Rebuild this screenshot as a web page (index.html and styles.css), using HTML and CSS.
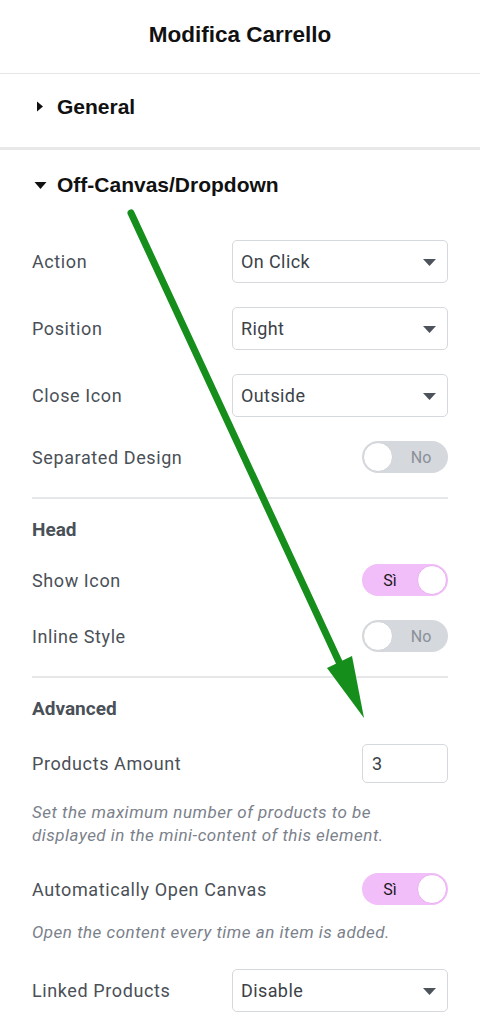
FILE: index.html
```html
<!DOCTYPE html>
<html lang="it">
<head>
<meta charset="utf-8">
<title>Modifica Carrello</title>
<link rel="stylesheet" href="styles.css">
</head>
<body>
<div class="page">
  <header class="header"><h1 class="title">Modifica Carrello</h1></header>

  <div class="section section-general">
    <svg class="caret-right" width="8" height="11" viewBox="0 0 8 11"><polygon points="1,0.5 7,5.5 1,10.5" fill="#111"/></svg>
    <span class="section-title">General</span>
  </div>

  <div class="section section-open">
    <svg class="caret-down" width="13" height="9" viewBox="0 0 13 9"><polygon points="0.5,1 12.5,1 6.5,8" fill="#111"/></svg>
    <span class="section-title">Off-Canvas/Dropdown</span>
  </div>

  <div class="fields">
    <div class="row row-select r-action">
      <span class="label">Action</span>
      <div class="select"><span>On Click</span><svg class="sel-caret" width="13" height="7" viewBox="0 0 13 7"><polygon points="0,0 13,0 6.5,7" fill="#4d535a"/></svg></div>
    </div>
    <div class="row row-select r-gap">
      <span class="label">Position</span>
      <div class="select"><span>Right</span><svg class="sel-caret" width="13" height="7" viewBox="0 0 13 7"><polygon points="0,0 13,0 6.5,7" fill="#4d535a"/></svg></div>
    </div>
    <div class="row row-select r-gap">
      <span class="label">Close Icon</span>
      <div class="select"><span>Outside</span><svg class="sel-caret" width="13" height="7" viewBox="0 0 13 7"><polygon points="0,0 13,0 6.5,7" fill="#4d535a"/></svg></div>
    </div>
    <div class="row row-toggle r-gap">
      <span class="label">Separated Design</span>
      <div class="toggle off"><span class="knob"></span><span class="ttext">No</span></div>
    </div>

    <div class="divider r-gap"></div>
    <div class="group-title g-gap">Head</div>

    <div class="row row-toggle r-show">
      <span class="label">Show Icon</span>
      <div class="toggle on"><span class="ttext">Sì</span><span class="knob"></span></div>
    </div>
    <div class="row row-toggle r-gap">
      <span class="label">Inline Style</span>
      <div class="toggle off"><span class="knob"></span><span class="ttext">No</span></div>
    </div>

    <div class="divider r-gap"></div>
    <div class="group-title g-gap">Advanced</div>

    <div class="row row-input r-gap">
      <span class="label">Products Amount</span>
      <div class="num-input">3</div>
    </div>
    <p class="desc d-1">Set the maximum number of products to be displayed in the mini-content of this element.</p>

    <div class="row row-toggle r-auto">
      <span class="label">Automatically Open Canvas</span>
      <div class="toggle on"><span class="ttext">Sì</span><span class="knob"></span></div>
    </div>
    <p class="desc d-2">Open the content every time an item is added.</p>

    <div class="row row-select r-linked">
      <span class="label">Linked Products</span>
      <div class="select"><span>Disable</span><svg class="sel-caret" width="13" height="7" viewBox="0 0 13 7"><polygon points="0,0 13,0 6.5,7" fill="#4d535a"/></svg></div>
    </div>
    <p class="desc d-3">Enable this option to show the linked products in the mini-cart.</p>
  </div>

  <svg class="arrow" width="480" height="1034" viewBox="0 0 480 1034">
    <line x1="131" y1="213" x2="340" y2="664" stroke="#168e1b" stroke-width="7" stroke-linecap="round"/>
    <polygon points="327,668 352,656 364,718" fill="#168e1b"/>
  </svg>
</div>
</body>
</html>
```

FILE: styles.css
```css
* { box-sizing: border-box; }
html, body { margin: 0; padding: 0; background: #fff; }
body { overflow: hidden; height: 1034px; }

.page {
  position: relative;
  width: 480px;
  font-family: Roboto, "Noto Sans", Arial, sans-serif;
}

.header {
  height: 74px;
  border-bottom: 1px solid #e6e6e6;
  display: flex;
  align-items: center;
  justify-content: center;
  padding-bottom: 3px;
}
.title {
  margin: 0;
  font-family: "Liberation Sans", Arial, sans-serif;
  font-weight: 700;
  font-size: 22.5px;
  color: #111;
}

.section {
  display: flex;
  align-items: center;
  padding-left: 34px;
}
.section-general {
  height: 76px;
  border-bottom: 3px solid #e8e8e8;
  padding-bottom: 8px;
}
.section-open {
  height: 70px;
}
.section-title {
  font-family: "Liberation Sans", Arial, sans-serif;
  font-weight: 700;
  font-size: 21px;
  color: #111;
}
.caret-right { margin-left: 2px; margin-right: 13px; }
.caret-down { margin-right: 10px; margin-top: 1px; }

.fields {
  display: flex;
  flex-direction: column;
  padding: 20px 32px 0 32px;
}

.row {
  display: flex;
  align-items: center;
  justify-content: space-between;
}
.row-select { height: 43px; }
.row-toggle { height: 32px; }
.row-input { height: 39px; }

.r-gap { margin-top: 24px; }
.r-show { margin-top: 23px; }
.r-auto { margin-top: 26px; }
.r-linked { margin-top: 25px; }
.g-gap { margin-top: 20px; }

.label {
  font-size: 18px;
  letter-spacing: 0.6px;
  color: #4a5057;
}

.select {
  width: 216px;
  height: 43px;
  border: 1px solid #d5d8dc;
  border-radius: 5px;
  display: flex;
  align-items: center;
  justify-content: space-between;
  padding: 0 11px 0 8px;
  font-size: 18px;
  letter-spacing: 0.4px;
  color: #3c4248;
}
.sel-caret { margin-top: 1px; }

.toggle {
  width: 86px;
  height: 32px;
  border-radius: 16px;
  display: flex;
  align-items: center;
  padding: 0 1px;
  font-size: 16px;
}
.toggle.off {
  background: #d5d8dc;
  color: #8a9099;
}
.toggle.on {
  background: #f2bef9;
  color: #1a1a1a;
  justify-content: space-between;
}
.knob {
  width: 30px;
  height: 30px;
  border-radius: 50%;
  background: #fff;
  border: 1px solid #cfd2d6;
  flex: none;
}
.toggle.on .knob { border-color: #eaaef3; }
.toggle .ttext { flex: 1; text-align: center; }
.toggle.off .ttext { padding-left: 2px; }

.num-input {
  width: 86px;
  height: 39px;
  border: 1px solid #d5d8dc;
  border-radius: 5px;
  display: flex;
  align-items: center;
  padding-left: 9px;
  font-size: 18px;
  color: #3c4248;
}

.divider {
  height: 2px;
  background: #e6e7e8;
}

.group-title {
  font-size: 19px;
  line-height: 22px;
  font-weight: 700;
  color: #4a5057;
}

.desc {
  margin: 0;
  font-size: 17px;
  line-height: 23px;
  font-style: italic;
  letter-spacing: 0.5px;
  color: #7b818b;
}
.d-1 { margin-top: 18px; padding-right: 30px; }
.d-2 { margin-top: 16px; }
.d-3 { margin-top: 19px; }

.arrow {
  position: absolute;
  top: 0;
  left: 0;
  pointer-events: none;
}
```
